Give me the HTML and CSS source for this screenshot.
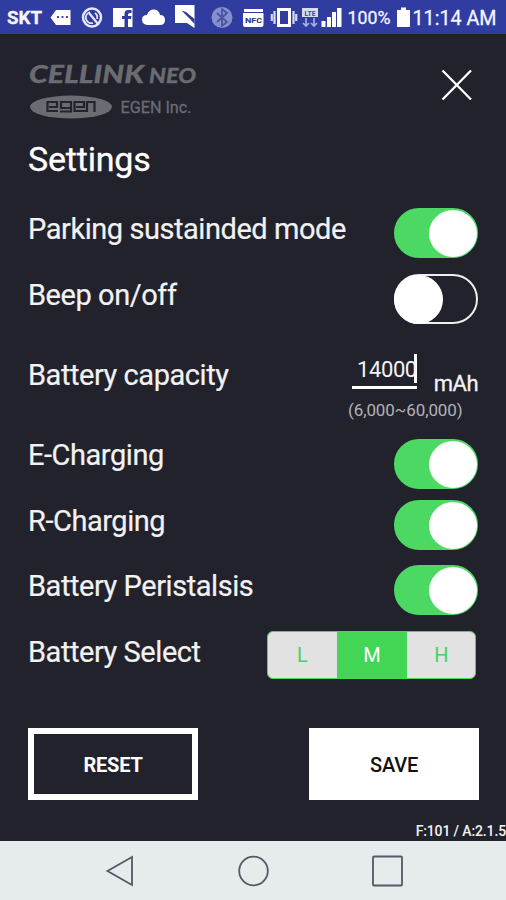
FILE: index.html
```html
<!DOCTYPE html>
<html lang="en">
<head>
<meta charset="utf-8">
<title>Settings</title>
<link rel="stylesheet" href="styles.css">
</head>
<body>
<header class="status">
  <svg width="506" height="34" viewBox="0 0 506 34">
    <g class="status-text">
      <text x="7" y="24" font-weight="700" textLength="35" lengthAdjust="spacingAndGlyphs">SKT</text>
      <text x="347.500" y="24" font-weight="400" textLength="43" lengthAdjust="spacingAndGlyphs">100%</text>
      <text x="412.500" y="25" font-size="20" font-weight="400" textLength="84" lengthAdjust="spacingAndGlyphs">11:14 AM</text>
    </g>
    <g fill="#fff">
      <path d="M50.500 17.500L56 10H70.500V25H56Z"/>
      <path d="M57 16h2v2h-2zM61.500 16h2v2h-2zM66 16h2v2h-2z" fill="#46509f"/>
      <circle cx="92" cy="17.500" r="9" fill="none" stroke="#e5e8ff" stroke-width="2.500"/>
      <path d="M90 12A5.500 5.500 0 0 0 93 23M95 13A5.500 5.500 0 0 1 97 19" fill="none" stroke="#dfe3fb" stroke-width="1.800"/>
      <path d="M89 13L98 24" stroke="#e5e8ff" stroke-width="2.200" fill="none"/>
      <path d="M113 8H132.500V27H128V19H131L131.500 16H128V14.500Q128 13 130 13H131.500V10H128Q124.500 10 124.500 14V16H122V19H124.500V27H113Z"/>
      <path d="M147 25Q142 24 142 19.500Q142 15 147 15Q149 9 154.500 9.500Q159 10 160 15Q165 15 165 20Q165 25 160 25Z"/>
      <path d="M175 5H194.500V28L187 23H175Z"/>
      <path d="M181.500 10.500L186 12L194.500 19V24L190 19Z" fill="#303c9b"/>
      <circle cx="222" cy="17.500" r="10.500" fill="#8790cd"/>
      <path d="M217 13L227 22L222 26V9L227 13L217 22" fill="none" stroke="#4854a8" stroke-width="1.800"/>
      <path d="M244 9H263V12H244ZM243 13H263.500V25Q263.500 27 261.500 27H245Q243 27 243 25Z"/>
      <text x="245" y="22.500" fill="#26347f" font-size="8" font-weight="700" textLength="17" lengthAdjust="spacingAndGlyphs">NFC</text>
      <path d="M277 8H291V27H277ZM280 11V24H288V11Z" fill-rule="evenodd"/>
      <path d="M274.500 11V24M271.800 14V21M293.500 11V24M296.200 14V21" stroke="#d6daf4" stroke-width="2.200"/>
      <rect x="302" y="8" width="16" height="9" fill="#d8dbf1"/>
      <text x="304.500" y="15.500" fill="#3a459d" font-size="8" font-weight="700" textLength="11" lengthAdjust="spacingAndGlyphs">LTE</text>
      <path d="M306 18V26M303 23L306 26L309 23M314 18V26M311 23L314 26L317 23" fill="none" stroke="#a7aee0" stroke-width="1.700"/>
      <path d="M321.500 21H325.500V27H321.500ZM327 17H331V27H327ZM332 12H336V27H332ZM337 8H341.500V27H337Z"/>
      <path d="M401 7.500H406V10H410V27H397V10H401Z"/>
    </g>
  </svg>
</header>

<main class="screen">
  <div class="top">
    <svg class="logo" width="176" height="60" viewBox="28 60 176 60">
      <g class="logo-name">
        <text x="29" y="83" font-size="25" textLength="115" lengthAdjust="spacingAndGlyphs">CELLINK</text>
        <text x="149" y="83" font-size="20" textLength="47" lengthAdjust="spacingAndGlyphs">NEO</text>
      </g>
      <ellipse cx="71" cy="107" rx="41" ry="11.500" fill="#6b6b72"/>
      <path d="M49 107H57V102H47.500V111H58M72 102H61V108H71M71 102V111.500H60M76 107H84V102H74.500V111H86M87 112V102H94.500V112" fill="none" stroke="#24242e" stroke-width="2.200"/>
      <text class="company" x="120.500" y="112.500" textLength="71" lengthAdjust="spacingAndGlyphs">EGEN Inc.</text>
    </svg>
    <svg class="close" width="32" height="32" viewBox="0 0 32 32"><path d="M1.500 1.500L30 30.500M30 1.500L1.500 30.500" stroke="#fff" stroke-width="2.300"/></svg>
  </div>
  <h1>Settings</h1>

  <section class="rows">
    <div class="row"><span class="label">Parking sustainded mode</span><span class="switch on"></span></div>
    <div class="row"><span class="label">Beep on/off</span><span class="switch"></span></div>
    <div class="row"><span class="label">Battery capacity</span>
      <div class="capacity">
        <div class="entry"><span class="field">14000</span><span class="unit">mAh</span></div>
        <div class="hint">(6,000~60,000)</div>
      </div>
    </div>
    <div class="row"><span class="label">E-Charging</span><span class="switch on low"></span></div>
    <div class="row"><span class="label">R-Charging</span><span class="switch on"></span></div>
    <div class="row"><span class="label">Battery Peristalsis</span><span class="switch on"></span></div>
    <div class="row"><span class="label">Battery Select</span>
      <div class="segments"><span>L</span><span class="active">M</span><span>H</span></div>
    </div>
  </section>

  <div class="actions">
    <div class="button reset">RESET</div>
    <div class="button save">SAVE</div>
  </div>
  <div class="version">F:101 / A:2.1.5</div>
</main>

<nav class="nav">
  <svg width="506" height="59" viewBox="0 0 506 59" fill="none" stroke="#505b68" stroke-width="1.800">
    <path d="M107.500 30L132 16V44Z"/>
    <circle cx="253.500" cy="30" r="14.300"/>
    <rect x="373" y="15.500" width="29" height="29" rx="1"/>
  </svg>
</nav>
</body>
</html>
```
FILE: styles.css
```css
* { box-sizing: border-box; }
body {
  margin: 0;
  width: 506px;
  height: 900px;
  overflow: hidden;
  display: flex;
  flex-direction: column;
  background: #22222d;
  color: #f2f2f2;
  font-family: Roboto, "Liberation Sans", sans-serif;
}
svg { display: block; flex: none; overflow: visible; }
.status { height: 34px; background: #303c9f; }
.status-text { fill: #f4f5ff; stroke: #f4f5ff; stroke-width: 0.3px; font-size: 18px; }
.screen {
  height: 807px;
  display: flex;
  flex-direction: column;
}
.screen > * { flex-shrink: 0; }
.top {
  display: flex;
  justify-content: space-between;
  padding: 26px 33px 0 28px;
  height: 86px;
}
.logo-name {
  fill: #6b6b72;
  stroke: #6b6b72;
  stroke-width: 0.3px;
  font-family: Lato, sans-serif;
  font-weight: 900;
  font-style: italic;
}
.company { fill: #6b6b72; stroke: #6b6b72; stroke-width: 0.3px; font-size: 16px; }
.close { margin-top: 9px; }
h1 {
  margin: 19px 0 0 28px;
  height: 69px;
  font-size: 34px;
  line-height: 41px;
  font-weight: 400;
  letter-spacing: -0.2px;
  color: #fff;
  -webkit-text-stroke: 0.3px #fff;
}
.rows {
  display: grid;
  grid-template-rows: 66px 80px 80px 66px 65px 66px 97px;
  padding: 0 28px;
}
.row { display: flex; justify-content: space-between; align-items: flex-start; }
.label {
  font-size: 29px;
  line-height: 42px;
  letter-spacing: -0.45px;
  white-space: nowrap;
  -webkit-text-stroke: 0.2px #f2f2f2;
}
.switch {
  display: flex;
  align-items: center;
  width: 84px;
  height: 50px;
  border: 2px solid #eee;
  border-radius: 25px;
}
.switch::before {
  content: "";
  width: 49px;
  height: 49px;
  margin-left: -2px;
  flex: none;
  border-radius: 50%;
  background: #fff;
}
.switch.on { justify-content: flex-end; background: #4bd963; border-color: #4bd963; }
.switch.on::before { width: 48px; height: 47px; margin: 0 -1px 0 0; }
.switch.low { margin-top: 5px; }
.capacity { width: 131px; }
.entry { display: flex; align-items: flex-start; justify-content: space-between; height: 44px; padding-left: 5px; }
.field {
  width: 65px;
  height: 35px;
  padding-left: 5px;
  border-bottom: 3px solid #fff;
  font-size: 22px;
  line-height: 32px;
  letter-spacing: -0.4px;
  background: linear-gradient(#fff, #fff) right top / 3px 29px no-repeat;
}
.unit { font-size: 22px; line-height: 26px; margin-top: 17px; letter-spacing: -0.5px; -webkit-text-stroke: 0.3px #f2f2f2; }
.hint { padding-left: 1px; color: #b2b2b6; font-size: 17px; line-height: 24px; letter-spacing: -0.1px; }
.segments {
  display: grid;
  grid-template-columns: 69px 70px 69px;
  width: 209px;
  height: 48px;
  margin-right: 2px;
  border: 1.5px solid #43d957;
  border-radius: 6px;
  background: #e2e2e2;
  overflow: hidden;
}
.segments span { text-align: center; font-size: 20px; line-height: 47px; color: #4ccf61; }
.segments .active { background: #43d655; color: #fff; }
.actions { display: flex; justify-content: space-between; padding: 0 27px 0 28px; }
.button {
  width: 170px;
  height: 72px;
  text-align: center;
  font-size: 20px;
  line-height: 74px;
  letter-spacing: -0.2px;
  font-weight: 500;
}
.reset { border: 6px solid #fff; line-height: 62px; font-weight: 700; color: #fff; }
.save { background: #fff; color: #111; }
.version {
  margin-top: 22px;
  text-align: right;
  font-size: 14px;
  line-height: 19px;
  font-weight: 500;
  letter-spacing: -0.13px;
  white-space: nowrap;
}
.nav { height: 59px; background: #e6ebec; }
```
